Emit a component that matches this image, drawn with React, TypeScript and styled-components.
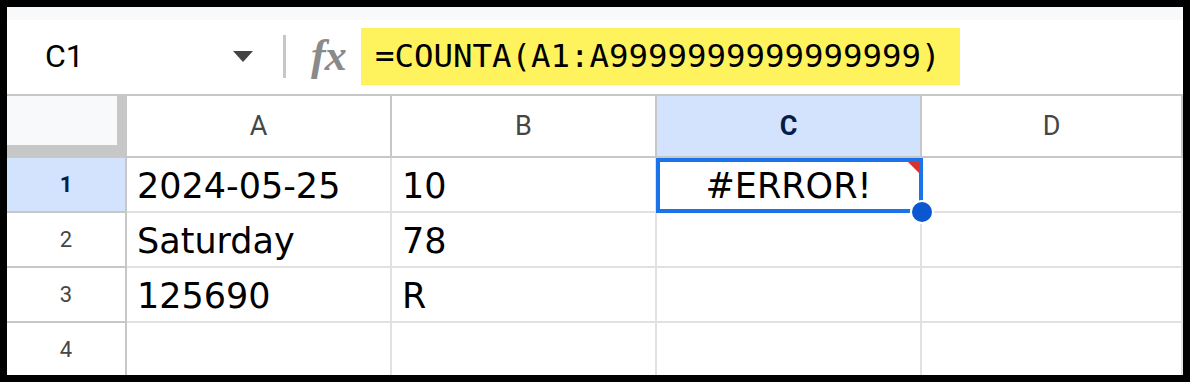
import React from 'react'
import styled, { createGlobalStyle } from 'styled-components'

const HEADER_LINE = '#c7c7c7'
const GRID_LINE = '#e1e1e1'
const SELECT_BG = '#d3e3fd'
const SELECT_TEXT = '#041e49'
const FOCUS_BLUE = '#1a73e8'

const COLUMNS = ['A', 'B', 'C', 'D']
const ROWS = [
  ['2024-05-25', '10', '#ERROR!', ''],
  ['Saturday', '78', '', ''],
  ['125690', 'R', '', ''],
  ['', '', '', ''],
]

const GlobalStyle = createGlobalStyle`
  html, body {
    margin: 0;
    padding: 0;
    background: #fff;
  }
  * {
    box-sizing: border-box;
  }
`

const Frame = styled.div`
  width: 1190px;
  height: 382px;
  border: 7px solid #000;
  overflow: hidden;
  display: flex;
  flex-direction: column;
  background: #fff;
`

const TopStrip = styled.div`
  height: 13px;
  background: #f8f9fa;
  flex-shrink: 0;
`

const FormulaBar = styled.div`
  height: 76px;
  flex-shrink: 0;
  display: flex;
  align-items: center;
  border-bottom: 2px solid ${HEADER_LINE};
  padding-bottom: 2px;
`

const NameBox = styled.div`
  width: 276px;
  display: flex;
  align-items: center;
  padding-left: 38px;
  font-family: Roboto, 'Liberation Sans', sans-serif;
  font-size: 32px;
  color: #000;
`

const NameText = styled.span`
  flex: 1;
`

const Caret = styled.span`
  width: 0;
  height: 0;
  border-left: 10.5px solid transparent;
  border-right: 10.5px solid transparent;
  border-top: 11px solid #444;
  margin-right: 30px;
`

const Divider = styled.span`
  width: 3px;
  height: 43px;
  background: ${HEADER_LINE};
`

const FxLabel = styled.span`
  font-family: 'Liberation Serif', 'DejaVu Serif', serif;
  font-style: italic;
  font-weight: 700;
  font-size: 44px;
  line-height: 1;
  color: #8a8a8a;
  margin-left: 25px;
  width: 50px;
  letter-spacing: -1px;
`

const Formula = styled.span`
  display: inline-flex;
  align-items: center;
  height: 57px;
  width: 599px;
  padding-left: 14px;
  background: #fff35d;
  font-family: 'DejaVu Sans Mono', 'Liberation Mono', monospace;
  font-size: 32.4px;
  color: #000;
  white-space: nowrap;
`

const Sheet = styled.div`
  display: grid;
  grid-template-columns: 120px 265px 265px 265px 261px;
  grid-template-rows: 62px 55px 55px 55px 55px;
`

const Corner = styled.div`
  background: #f8f9fa;
  border-right: 10px solid ${HEADER_LINE};
  border-bottom: 13px solid ${HEADER_LINE};
`

const ColHeader = styled.div<{ $active?: boolean }>`
  display: flex;
  align-items: center;
  justify-content: center;
  background: ${({ $active }) => ($active ? SELECT_BG : '#fff')};
  border-right: 2px solid ${HEADER_LINE};
  border-bottom: 2px solid ${HEADER_LINE};
  font-family: Roboto, 'Liberation Sans', sans-serif;
  font-size: 27px;
  font-weight: ${({ $active }) => ($active ? 700 : 400)};
  color: ${({ $active }) => ($active ? SELECT_TEXT : '#444746')};
`

const RowHeader = styled.div<{ $active?: boolean }>`
  display: flex;
  align-items: center;
  justify-content: center;
  background: ${({ $active }) => ($active ? SELECT_BG : '#fff')};
  border-right: 2px solid ${HEADER_LINE};
  border-bottom: 2px solid ${HEADER_LINE};
  font-family: Roboto, 'Liberation Sans', sans-serif;
  font-size: 22px;
  font-weight: ${({ $active }) => ($active ? 700 : 400)};
  color: ${({ $active }) => ($active ? SELECT_TEXT : '#444746')};
`

const Cell = styled.div<{ $centered?: boolean }>`
  position: relative;
  display: flex;
  align-items: center;
  justify-content: ${({ $centered }) => ($centered ? 'center' : 'flex-start')};
  padding-top: 3px;
  padding-left: ${({ $centered }) => ($centered ? '0' : '10px')};
  border-right: 2px solid ${GRID_LINE};
  border-bottom: 2px solid ${GRID_LINE};
  font-family: 'DejaVu Sans', Verdana, sans-serif;
  font-size: 35px;
  color: #000;
  white-space: nowrap;
`

const Selection = styled.div`
  position: absolute;
  top: 0;
  left: -1px;
  right: -3px;
  bottom: -2px;
  border: 4px solid ${FOCUS_BLUE};
  pointer-events: none;
`

const ErrorFlag = styled.span`
  position: absolute;
  top: 0;
  right: 0;
  width: 0;
  height: 0;
  border-top: 11px solid #dc3328;
  border-left: 11px solid transparent;
`

const FillHandle = styled.span`
  position: absolute;
  right: -14px;
  bottom: -13px;
  width: 24px;
  height: 24px;
  border-radius: 50%;
  background: #0b57d0;
  border: 2px solid #fff;
  z-index: 2;
`

export default function App() {
  return (
    <Frame>
      <GlobalStyle />
      <TopStrip />
      <FormulaBar>
        <NameBox>
          <NameText>C1</NameText>
          <Caret />
        </NameBox>
        <Divider />
        <FxLabel>fx</FxLabel>
        <Formula>=COUNTA(A1:A9999999999999999)</Formula>
      </FormulaBar>
      <Sheet>
        <Corner />
        {COLUMNS.map((col) => (
          <ColHeader key={col} $active={col === 'C'}>
            {col}
          </ColHeader>
        ))}
        {ROWS.map((row, r) => (
          <React.Fragment key={r}>
            <RowHeader $active={r === 0}>{r + 1}</RowHeader>
            {row.map((value, c) => {
              const selected = r === 0 && c === 2
              return (
                <Cell key={c} $centered={selected}>
                  {value}
                  {selected && (
                    <>
                      <Selection>
                        <ErrorFlag />
                      </Selection>
                      <FillHandle />
                    </>
                  )}
                </Cell>
              )
            })}
          </React.Fragment>
        ))}
      </Sheet>
    </Frame>
  )
}
